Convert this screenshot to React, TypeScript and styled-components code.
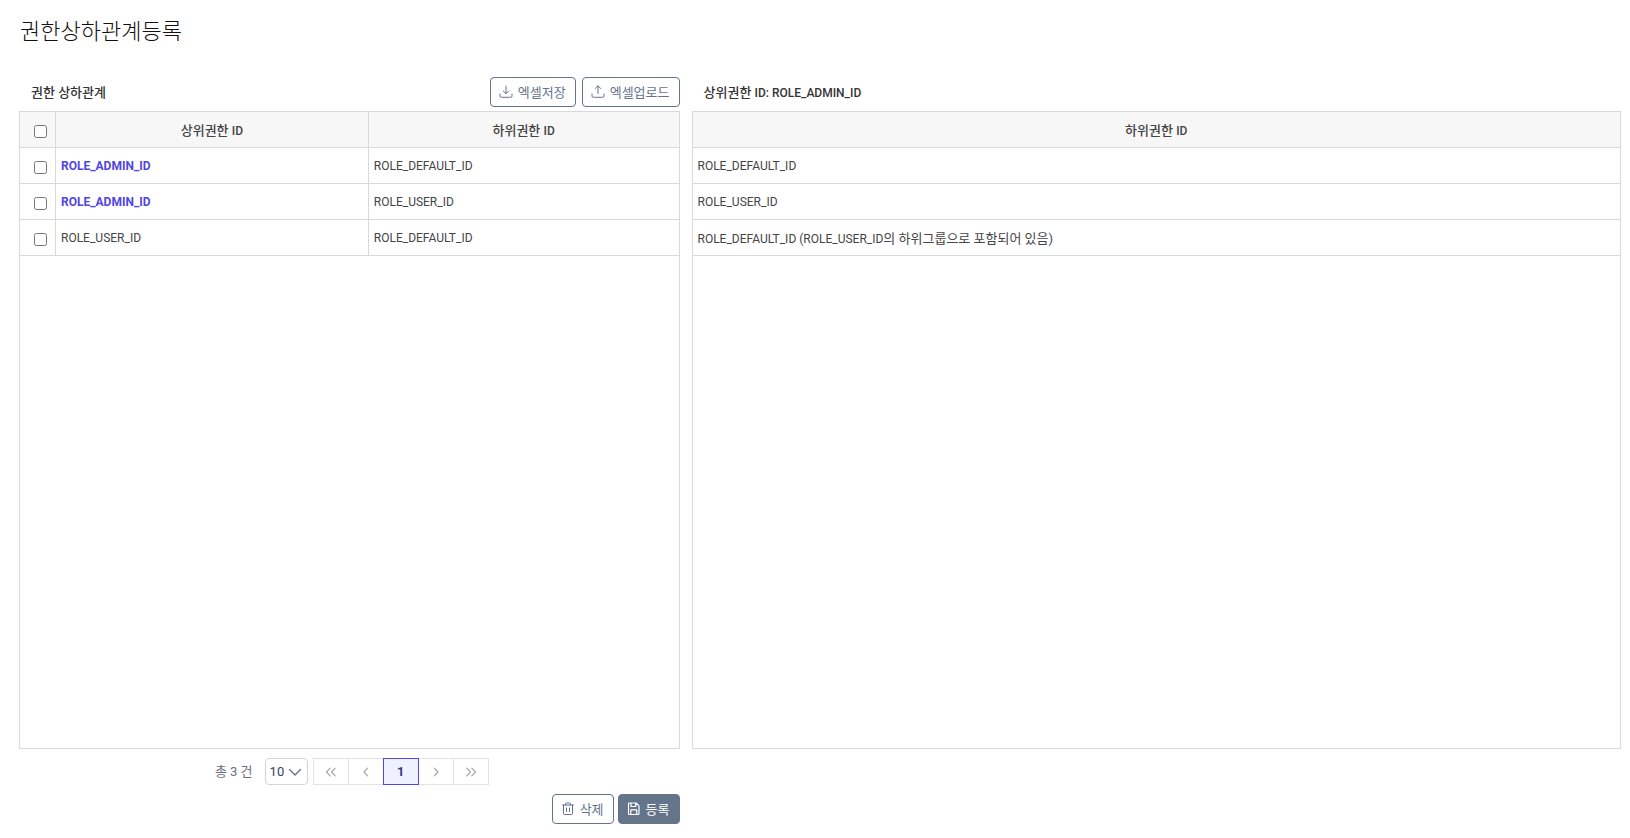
import React from "react";
import styled, { createGlobalStyle, css } from "styled-components";

const line = "#d9d9d9";
const slate = "#64748b";
const indigo = "#4f46e5";

const GlobalStyle = createGlobalStyle`
  * { box-sizing: border-box; }
  body {
    margin: 0;
    background: #fff;
    color: #444;
    font-family: Roboto, "Noto Sans CJK KR", sans-serif;
    font-size: 13px;
    font-weight: 400;
  }
  button, select, input { font: inherit; }
`;

const Page = styled.main`
  display: flex;
  flex-direction: column;
  min-height: 100vh;
  padding: 17px 3px 13px 13px;
`;

const PageTitle = styled.h1`
  margin: 0 0 30px;
  padding: 0 7px;
  color: #111;
  font-size: 22px;
  font-weight: 300;
  line-height: 30px;
`;

const Columns = styled.div`
  flex: 1;
  display: grid;
  grid-template-columns: 5fr 7fr;
`;

const Panel = styled.section`
  display: flex;
  flex-direction: column;
  min-width: 0;
  padding: 0 6px;
`;

const PanelHeader = styled.header`
  display: flex;
  align-items: center;
  justify-content: space-between;
  height: 30px;
  margin-bottom: 4px;
  padding-left: 12px;
`;

const PanelTitle = styled.h2`
  margin: 0;
  padding-bottom: 2px;
  color: #333;
  font-size: 13px;
  font-weight: 500;
`;

const Code = styled.span`
  font-size: 12px;
`;

const ButtonGroup = styled.div<{ $gap: number }>`
  display: flex;
  gap: ${(p) => p.$gap}px;
`;

const Button = styled.button<{ $filled?: boolean }>`
  display: inline-flex;
  align-items: center;
  gap: 5px;
  height: 30px;
  padding: 0 9px 2px 8px;
  border: 1px solid ${slate};
  border-radius: 4px;
  background: ${(p) => (p.$filled ? slate : "#fff")};
  color: ${(p) => (p.$filled ? "#fff" : slate)};
  font-size: 13px;
  white-space: nowrap;
  cursor: pointer;
`;

const Frame = styled.div`
  flex: 1;
  border: 1px solid ${line};
`;

const Table = styled.table`
  width: 100%;
  table-layout: fixed;
  border-collapse: separate;
  border-spacing: 0;
`;

const cell = css`
  height: 36px;
  border-bottom: 1px solid ${line};
  &:not(:last-child) { border-right: 1px solid ${line}; }
`;

const HeadCell = styled.th<{ $width?: string }>`
  ${cell}
  width: ${(p) => p.$width ?? "auto"};
  padding: 0 5px;
  background: #f7f7f7;
  font-weight: 500;
  text-align: center;
`;

const Cell = styled.td<{ $strong?: boolean }>`
  ${cell}
  padding: 0 5px;
  color: ${(p) => (p.$strong ? indigo : "#444")};
  font-weight: ${(p) => (p.$strong ? 700 : 400)};
`;

const CheckHead = styled(HeadCell)`
  padding: 4px 0 0 14px;
  text-align: left;
`;

const CheckCell = styled(Cell)`
  padding: 4px 0 0 14px;
`;

const Checkbox = styled.input`
  display: block;
  width: 13px;
  height: 13px;
  margin: 0;
`;

const Footer = styled.footer`
  height: 76px;
`;

const Pager = styled.nav`
  display: flex;
  align-items: center;
  justify-content: center;
  height: 27px;
  margin: 9px 0;
  padding-left: 5px;
`;

const Total = styled.span`
  margin-right: 12px;
  padding-bottom: 2px;
  color: #6b7280;
`;

const SizeBox = styled.div`
  position: relative;
  width: 43px;
  height: 27px;
  margin-right: 5px;
  svg {
    position: absolute;
    top: 7px;
    right: 6px;
    pointer-events: none;
    color: #6b7280;
  }
`;

const SizeSelect = styled.select`
  appearance: none;
  width: 100%;
  height: 100%;
  padding: 0 4px;
  border: 1px solid #d1d5db;
  border-radius: 4px;
  background: #fff;
  color: #374151;
`;

const PageButton = styled.button<{ $active?: boolean }>`
  display: flex;
  align-items: center;
  justify-content: center;
  position: relative;
  z-index: ${(p) => (p.$active ? 1 : 0)};
  width: 36px;
  height: 27px;
  padding: 0;
  border: 1px solid ${(p) => (p.$active ? indigo : "#e2e2e2")};
  background: ${(p) => (p.$active ? "#eef2ff" : "#fff")};
  color: ${(p) => (p.$active ? "#312e81" : "#a3a6ab")};
  font-weight: 600;
  cursor: pointer;
  & + & { margin-left: -1px; }
`;

const Actions = styled.div`
  display: flex;
  justify-content: flex-end;
  gap: 4px;
`;

type IconProps = { d: string; size?: number; width?: number };

const Icon = ({ d, size = 14, width = 1 }: IconProps) => (
  <svg
    width={size}
    height={size}
    viewBox="0 0 14 14"
    fill="none"
    stroke="currentColor"
    strokeWidth={width}
    strokeLinecap="round"
    strokeLinejoin="round"
    aria-hidden="true"
  >
    <path d={d} />
  </svg>
);

const icons = {
  download: "M7 2v7.5M4.3 7L7 9.700l2.700-2.700M1 10v2a1.300 1.300 0 0 0 1.300 1.300h9.400a1.300 1.300 0 0 0 1.300-1.300V10",
  upload: "M7 9.500V2M4.300 4.500L7 1.800l2.700 2.700M1 10v2a1.300 1.300 0 0 0 1.300 1.300h9.400a1.300 1.300 0 0 0 1.300-1.300V10",
  trash: "M1.500 4h11M4.500 4V2.800a.8.8 0 0 1 .8-.8h3.400a.8.8 0 0 1 .8.8V4M2.500 4v8.500a1 1 0 0 0 1 1h7a1 1 0 0 0 1-1V4M5.500 7v3.500M8.500 7v3.500",
  save: "M2.500 2h6.700l2.800 2.800v7.700a1 1 0 0 1-1 1H2.500a1 1 0 0 1-1-1V3a1 1 0 0 1 1-1zM3.800 13.300V8.900h5.900v4.400M4 2.200v3.300h4.700V2.200",
  down: "M1.500 4.500L7 10l5.500-5.500",
  first: "M6.200 3.200L2.500 7l3.700 3.800M11.200 3.200L7.500 7l3.700 3.800",
  prev: "M8.600 3.200L5 7l3.600 3.800",
  next: "M5.400 3.200L9 7l-3.600 3.800",
  last: "M2.800 3.200L6.500 7l-3.700 3.800M7.800 3.200L11.500 7l-3.700 3.800",
};

const relations = [
  { parent: "ROLE_ADMIN_ID", child: "ROLE_DEFAULT_ID", selected: true },
  { parent: "ROLE_ADMIN_ID", child: "ROLE_USER_ID", selected: true },
  { parent: "ROLE_USER_ID", child: "ROLE_DEFAULT_ID", selected: false },
];

const children = [
  { code: "ROLE_DEFAULT_ID" },
  { code: "ROLE_USER_ID" },
  { code: "ROLE_DEFAULT_ID (ROLE_USER_ID", note: "의 하위그룹으로 포함되어 있음)" },
];

export default function App() {
  return (
    <>
      <GlobalStyle />
      <Page>
        <PageTitle>권한상하관계등록</PageTitle>
        <Columns>
          <Panel>
            <PanelHeader>
              <PanelTitle>권한 상하관계</PanelTitle>
              <ButtonGroup $gap={6}>
                <Button type="button"><Icon d={icons.download} />엑셀저장</Button>
                <Button type="button"><Icon d={icons.upload} />엑셀업로드</Button>
              </ButtonGroup>
            </PanelHeader>
            <Frame>
              <Table>
                <thead>
                  <tr>
                    <CheckHead $width="36px"><Checkbox type="checkbox" aria-label="전체 선택" /></CheckHead>
                    <HeadCell $width="47.5%">상위권한 <Code>ID</Code></HeadCell>
                    <HeadCell>하위권한 <Code>ID</Code></HeadCell>
                  </tr>
                </thead>
                <tbody>
                  {relations.map((r) => (
                    <tr key={r.parent + r.child}>
                      <CheckCell><Checkbox type="checkbox" aria-label={`${r.parent} ${r.child}`} /></CheckCell>
                      <Cell $strong={r.selected}><Code>{r.parent}</Code></Cell>
                      <Cell><Code>{r.child}</Code></Cell>
                    </tr>
                  ))}
                </tbody>
              </Table>
            </Frame>
            <Footer>
              <Pager aria-label="페이지">
                <Total>총 3 건</Total>
                <SizeBox>
                  <SizeSelect aria-label="페이지 크기" defaultValue="10">
                    <option>10</option>
                    <option>20</option>
                    <option>50</option>
                  </SizeSelect>
                  <Icon d={icons.down} width={1.4} />
                </SizeBox>
                <PageButton type="button" aria-label="처음"><Icon d={icons.first} width={1.2} /></PageButton>
                <PageButton type="button" aria-label="이전"><Icon d={icons.prev} width={1.2} /></PageButton>
                <PageButton type="button" $active aria-current="page">1</PageButton>
                <PageButton type="button" aria-label="다음"><Icon d={icons.next} width={1.2} /></PageButton>
                <PageButton type="button" aria-label="마지막"><Icon d={icons.last} width={1.2} /></PageButton>
              </Pager>
              <Actions>
                <Button type="button"><Icon d={icons.trash} />삭제</Button>
                <Button type="button" $filled><Icon d={icons.save} width={1.2} />등록</Button>
              </Actions>
            </Footer>
          </Panel>
          <Panel>
            <PanelHeader>
              <PanelTitle>상위권한 <Code>ID: ROLE_ADMIN_ID</Code></PanelTitle>
            </PanelHeader>
            <Frame>
              <Table>
                <thead>
                  <tr><HeadCell>하위권한 <Code>ID</Code></HeadCell></tr>
                </thead>
                <tbody>
                  {children.map((c) => (
                    <tr key={c.code}><Cell><Code>{c.code}</Code>{c.note}</Cell></tr>
                  ))}
                </tbody>
              </Table>
            </Frame>
            <Footer />
          </Panel>
        </Columns>
      </Page>
    </>
  );
}
